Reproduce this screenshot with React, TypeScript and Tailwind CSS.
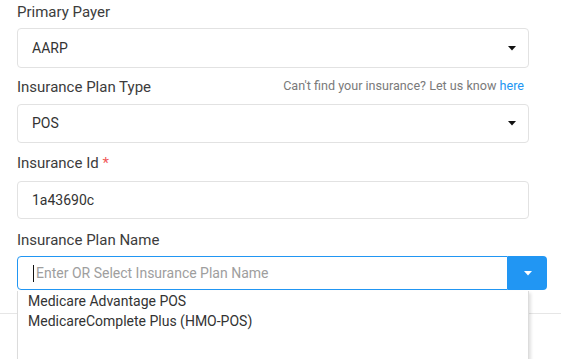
import { ReactNode } from "react";

const Caret = ({ className }: { className?: string }) => (
  <svg width="8" height="5" viewBox="0 0 8 5" className={className}>
    <path d="M0 0 L8 0 L4 4.5 Z" fill="currentColor" />
  </svg>
);

const Label = ({ children, className }: { children: ReactNode; className?: string }) => (
  <div className={`text-[15px] leading-[22px] text-[#3c3c3c] ${className ?? ""}`}>{children}</div>
);

const SelectBox = ({ value, className }: { value: string; className?: string }) => (
  <div
    className={`flex items-center justify-between rounded-[4px] border border-[#e2e2e2] bg-white pl-[14px] pr-[12px] text-[14px] text-[#333] ${className ?? ""}`}
  >
    <span>{value}</span>
    <Caret className="text-[#111]" />
  </div>
);

export default function App() {
  const plans = ["Medicare Advantage POS", "MedicareComplete Plus (HMO-POS)"];

  return (
    <div className="relative h-[359px] w-[561px] overflow-hidden bg-white font-['Roboto',sans-serif]">
      <div className="w-[529px] pl-[17px] pt-[1px]">
        <Label>Primary Payer</Label>
        <SelectBox value="AARP" className="mt-[5px] h-[40px]" />

        <div className="mt-[8px] flex items-start justify-between pr-[5px]">
          <Label>Insurance Plan Type</Label>
          <div className="text-[12.6px] leading-[20px] text-[#7a7a7a]">
            Can't find your insurance? Let us know <span className="text-[#2196f3]">here</span>
          </div>
        </div>
        <SelectBox value="POS" className="mt-[6px] h-[39px]" />

        <Label className="mt-[9px]">
          Insurance Id <span className="text-[#f15a5a]">*</span>
        </Label>
        <div className="mt-[7px] flex h-[38px] items-center rounded-[4px] border border-[#e2e2e2] pl-[14px] text-[14px] text-[#333]">
          1a43690c
        </div>

        <Label className="mt-[10px]">Insurance Plan Name</Label>
        <div className="mt-[5px] flex h-[34px] w-[530px]">
          <div className="flex flex-1 items-center rounded-l-[4px] border border-[#2196f3] pl-[15px] text-[14px]">
            <span className="h-[17px] w-[1px] bg-[#111]" />
            <span className="ml-[2px] text-[#9e9e9e]">Enter OR Select Insurance Plan Name</span>
          </div>
          <div className="flex w-[39px] items-center justify-center rounded-r-[4px] bg-[#2196f3] text-white">
            <Caret className="text-white" />
          </div>
        </div>
      </div>

      <div className="mt-[23px] border-t border-[#e6e6e6]" />

      <div className="absolute left-[17px] top-[291px] h-[100px] w-[512px] border-x border-[#dcdcdc] bg-white shadow-[2px_2px_3px_rgba(0,0,0,0.12)]">
        {plans.map((p) => (
          <div key={p} className="pl-[10px] text-[14px] leading-[20px] text-[#333]">
            {p}
          </div>
        ))}
      </div>
    </div>
  );
}
